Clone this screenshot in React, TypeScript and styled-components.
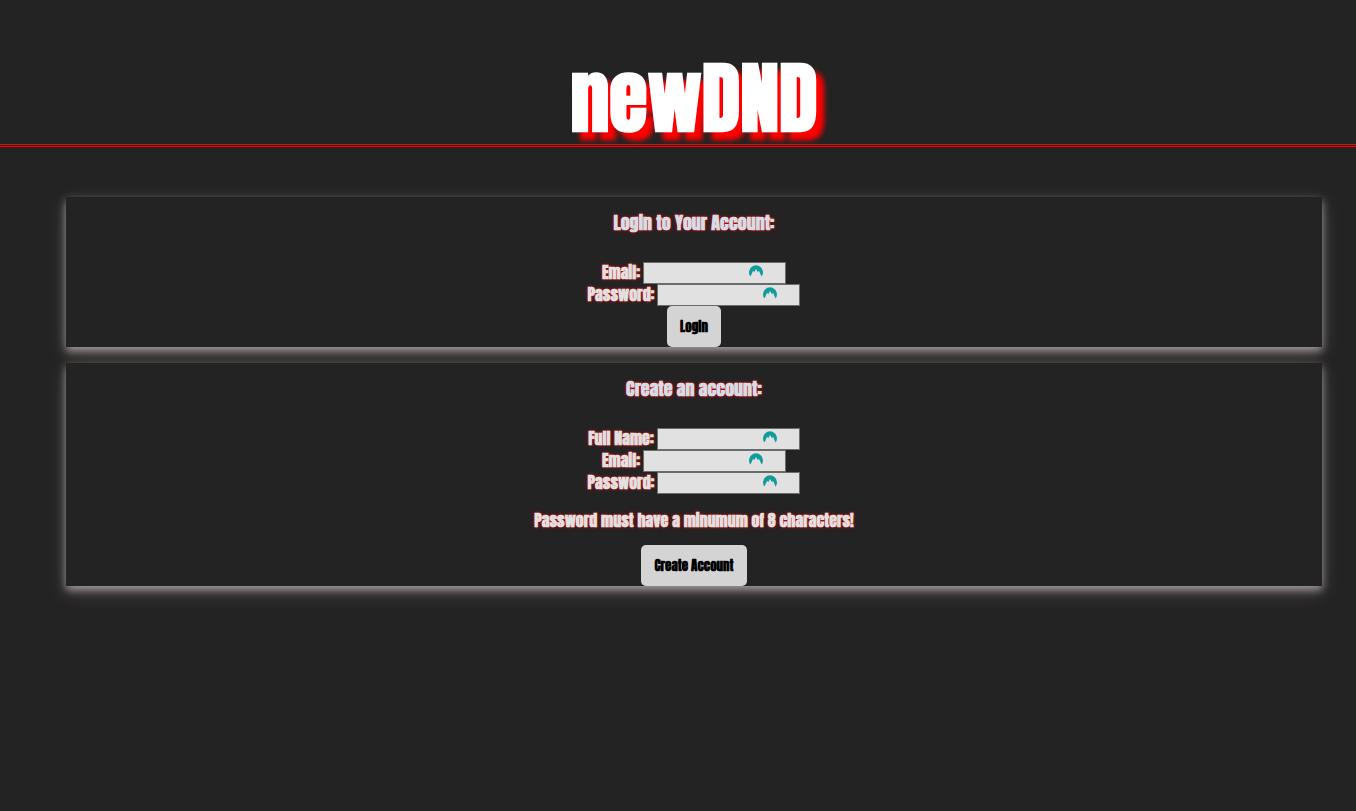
import React, { useId } from "react";
import styled, { createGlobalStyle } from "styled-components";

const GlobalStyle = createGlobalStyle`
  *, *::before, *::after { box-sizing: border-box; }
  body {
    margin: 0;
    background: #232323;
    color: #e0e0e0;
    font-family: Impact, Anton, "Open Sans Condensed", "Roboto Condensed", Roboto, sans-serif;
    font-weight: 700;
  }
`;

const Header = styled.header`
  height: 147px;
  padding: 50px 0 0 32px;
  border-bottom: 3px double #ff0000;
  text-align: center;
`;

const Title = styled.h1`
  margin: 0;
  color: #ffffff;
  font-size: 78px;
  line-height: 96px;
  text-shadow: 8px 8px 5px #ff0000;
`;

const Main = styled.main`
  display: flex;
  flex-direction: column;
  gap: 16px;
  padding: 50px 34px 50px 66px;
`;

const Panel = styled.form`
  display: flex;
  flex-direction: column;
  align-items: center;
  background: #232323;
  box-shadow: 0 4px 8px 0 rgba(255, 250, 250, 0.5),
    0 6px 20px 0 rgba(255, 225, 220, 0.19);
`;

const Heading = styled.h2`
  margin: 14px 0 27px;
  color: #d6dce4;
  font-size: 18px;
  line-height: 24px;
  text-shadow: 0 0 3px #ff0000;
`;

const Row = styled.div`
  display: flex;
  align-items: flex-start;
  gap: 3px;
  height: 22px;
`;

const Label = styled.label`
  font-size: 16px;
  line-height: 20px;
  text-shadow: 0 0 3px #ff0000;
`;

const InputBox = styled.span`
  position: relative;
  display: flex;
`;

const Input = styled.input`
  width: 143px;
  height: 22px;
  padding: 1px 40px 1px 2px;
  border: 1px solid #6b6b6b;
  border-radius: 0;
  background: #e1e1e1;
  color: #000000;
  font: 13px "Liberation Sans", sans-serif;
`;

const Badge = styled.svg`
  position: absolute;
  top: 3px;
  right: 23px;
  width: 14px;
  height: 13px;
  pointer-events: none;
`;

const Note = styled.p`
  margin: 16px 0 15px;
  font-size: 16px;
  line-height: 20px;
  text-shadow: 0 0 3px #ff0000;
`;

const Button = styled.button`
  height: 41px;
  padding: 0 13px;
  border: 0;
  border-radius: 5px;
  background: #d4d4d4;
  color: #000000;
  font-family: inherit;
  font-size: 13px;
  font-weight: 700;
`;

function Field({ label, type = "text" }: { label: string; type?: string }) {
  const id = useId();
  return (
    <Row>
      <Label htmlFor={id}>{label}</Label>
      <InputBox>
        <Input id={id} type={type} />
        <Badge viewBox="0 0 14 13" aria-hidden="true">
          <path
            fill="#119c9c"
            d="M1.5 11.6A7 7 0 1 1 12.5 11.6L10 5.8 8.9 7.2 7 4 5.2 7.2 4.1 5.8Z"
          />
        </Badge>
      </InputBox>
    </Row>
  );
}

export default function App() {
  return (
    <>
      <GlobalStyle />
      <Header>
        <Title>newDND</Title>
      </Header>
      <Main>
        <Panel>
          <Heading>Login to Your Account:</Heading>
          <Field label="Email:" type="email" />
          <Field label="Password:" type="password" />
          <Button type="button">Login</Button>
        </Panel>
        <Panel>
          <Heading>Create an account:</Heading>
          <Field label="Full Name:" />
          <Field label="Email:" type="email" />
          <Field label="Password:" type="password" />
          <Note>Password must have a minumum of 8 characters!</Note>
          <Button type="button">Create Account</Button>
        </Panel>
      </Main>
    </>
  );
}
